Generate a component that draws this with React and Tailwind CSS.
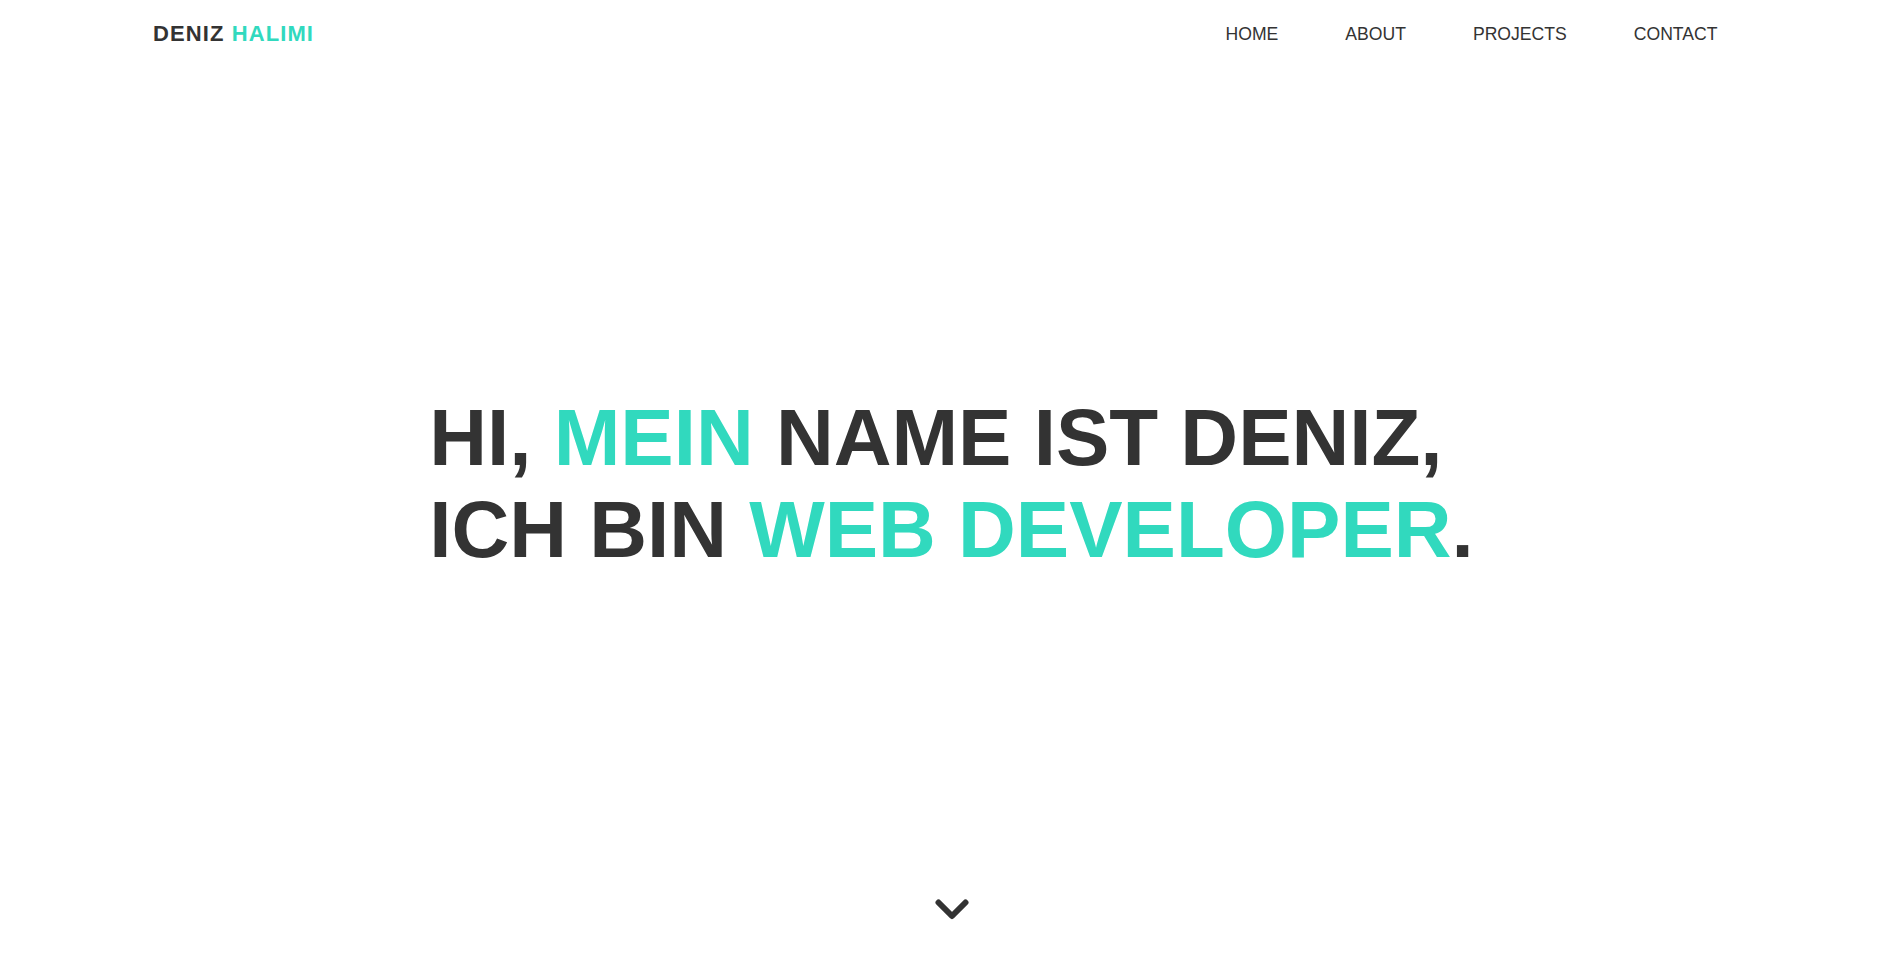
import React from 'react'

const links = ['HOME', 'ABOUT', 'PROJECTS', 'CONTACT']

const ChevronDown = () => (
  <svg width="34" height="21" viewBox="0 0 34 21" fill="none">
    <polyline points="3.5,3.5 17,17 30.5,3.5" stroke="#333333" strokeWidth="6" strokeLinecap="round" strokeLinejoin="round" />
  </svg>
)

export default function App() {
  return (
    <div className="min-h-screen h-[966px] bg-white flex flex-col text-[#333333] font-['Liberation_Sans',Arial,sans-serif]">
      {/* Header */}
      <header className="w-[1600px] mx-auto h-[68px] flex items-center justify-between">
        <a href="#" className="pl-[1.5px] text-[22px] font-bold tracking-[1.1px] leading-none">
          DENIZ <span className="text-[#31d9be]">HALIMI</span>
        </a>
        <nav className="flex items-center pt-[2px]">
          {links.map(l => (
            <a key={l} href="#" className="px-[33.5px] last:pr-[34px] text-[17.6px] leading-none text-[#333333]">
              {l}
            </a>
          ))}
        </nav>
      </header>

      {/* Hero */}
      <main className="flex-1 flex items-center justify-center">
        <h1 className="w-fit text-left text-[80px] font-bold leading-[92px]">
          HI, <span className="text-[#31d9be]">MEIN</span> NAME IST DENIZ,<br />
          ICH BIN <span className="text-[#31d9be]">WEB DEVELOPER</span>.
        </h1>
      </main>

      {/* Scroll hint */}
      <div className="flex justify-center pb-[46px]">
        <a href="#about" className="block"><ChevronDown /></a>
      </div>
    </div>
  )
}
